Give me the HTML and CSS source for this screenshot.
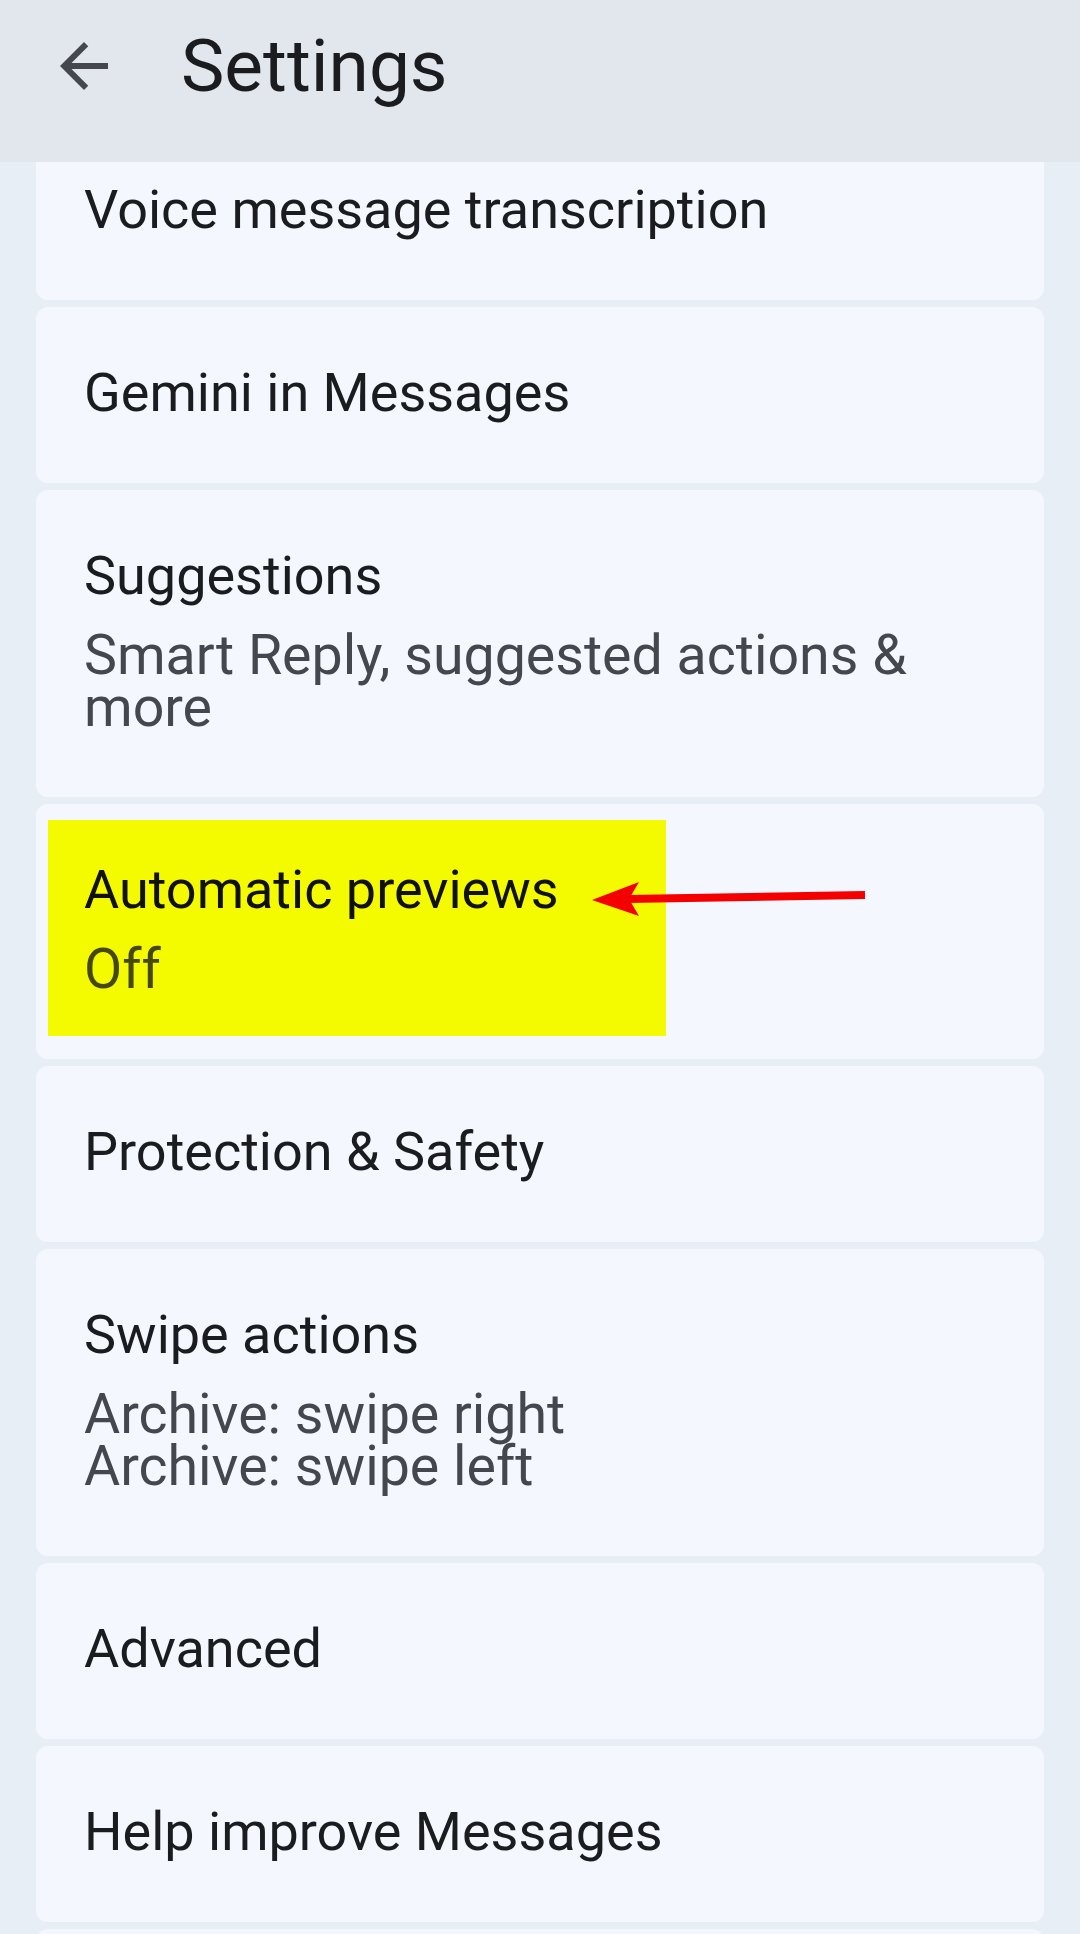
FILE: index.html
```html
<!DOCTYPE html>
<html lang="en">
<head>
<meta charset="utf-8">
<title>Settings</title>
<link rel="stylesheet" href="styles.css">
</head>
<body>
<header class="appbar">
  <div class="toolbar">
    <svg class="back" viewBox="0 0 24 24" width="72" height="72" aria-hidden="true">
      <path d="M20 11H7.83l5.59-5.59L12 4l-8 8 8 8 1.41-1.41L7.83 13H20v-2z"/>
    </svg>
    <h1 class="title">Settings</h1>
  </div>
</header>
<main class="list">
  <div class="card first"><div class="item-title">Voice message transcription</div></div>
  <div class="card"><div class="item-title">Gemini in Messages</div></div>
  <div class="card">
    <div class="item-title">Suggestions</div>
    <div class="item-sub">Smart Reply, suggested actions &amp; more</div>
  </div>
  <div class="card annotated">
    <div class="highlight"></div>
    <div class="item-title">Automatic previews</div>
    <div class="item-sub">Off</div>
    <svg class="arrow" viewBox="0 0 1008 255" width="1008" height="255" aria-hidden="true">
      <line x1="829" y1="91" x2="592" y2="95" stroke="#f50000" stroke-width="8"/>
      <polygon points="556,96 603,78 593,95 603,112" fill="#f50000"/>
    </svg>
  </div>
  <div class="card"><div class="item-title">Protection &amp; Safety</div></div>
  <div class="card">
    <div class="item-title">Swipe actions</div>
    <div class="item-sub">
      <div>Archive: swipe right</div>
      <div>Archive: swipe left</div>
    </div>
  </div>
  <div class="card"><div class="item-title">Advanced</div></div>
  <div class="card"><div class="item-title">Help improve Messages</div></div>
  <div class="card"><div class="item-title">About, terms &amp; privacy</div></div>
</main>
</body>
</html>
```
FILE: styles.css
```css
html, body {
  margin: 0;
  padding: 0;
}
body {
  width: 1080px;
  height: 1934px;
  overflow: hidden;
  background: #e8eef6;
  font-family: Roboto, "Noto Sans", sans-serif;
  position: relative;
}
.appbar {
  height: 162px;
  background: #e2e7ee;
  position: relative;
  z-index: 2;
}
.toolbar {
  height: 132px;
  display: flex;
  align-items: center;
}
.back {
  margin-left: 48px;
  fill: #44474e;
  flex: none;
}
.title {
  margin: 0 0 0 61px;
  font-size: 73px;
  font-weight: 400;
  color: #1a1c1f;
  line-height: 1;
}
.list {
  padding: 0 36px;
  display: flex;
  flex-direction: column;
  gap: 7px;
}
.card {
  background: #f4f8fe;
  border-radius: 12px;
  padding: 54px 100px 58px 48px;
  position: relative;
}
.card.first {
  margin-top: -38px;
}
.item-title {
  font-size: 54px;
  line-height: 64px;
  color: #1a1c1f;
  white-space: nowrap;
  position: relative;
}
.item-sub {
  font-size: 55.5px;
  line-height: 52px;
  color: #45474e;
  margin-top: 22px;
  padding-bottom: 5px;
  position: relative;
}
.annotated .item-title {
  color: #111100;
}
.annotated .item-sub {
  color: #45470b;
}
.highlight {
  position: absolute;
  left: 12px;
  top: 16px;
  width: 618px;
  height: 216px;
  background: #f4fa00;
}
.arrow {
  position: absolute;
  left: 0;
  top: 0;
}
```
